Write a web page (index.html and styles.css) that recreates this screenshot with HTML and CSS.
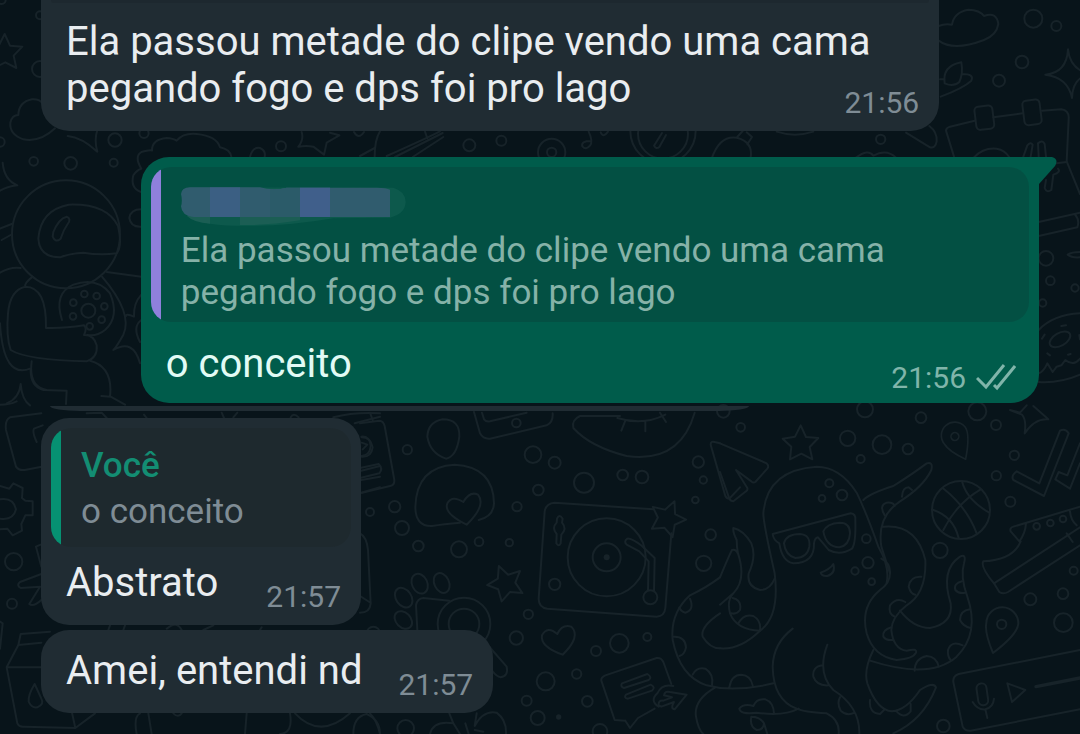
FILE: index.html
```html
<!DOCTYPE html>
<html lang="pt-BR">
<head>
    <meta charset="UTF-8">
    <meta name="viewport" content="width=device-width, initial-scale=1.0">
    <title>Conversa</title>
    <link rel="stylesheet" href="styles.css">
</head>
<body>
    <!-- Wallpaper doodles -->
    <svg class="wallpaper" width="1080" height="734" viewBox="0 0 3240 2202" aria-hidden="true">
        <defs>
            <path id="star" d="M0-52 L16-17 L53-14 L27 13 L35 50 L2 33 L-32 50 L-28 12 L-54-12 L-17-18 Z"/>
            <path id="sparkle" d="M-4-72 Q3-8 66 2 Q10 10 8 74 Q-4 12 -72 4 Q-8-2 -4-72 Z"/>
            <path id="pin" d="M-26 82 Q-52 20 -46-8 A48 48 0 0 1 50-6 Q48 26 -26 82 Z M14-4 a14 14 0 1 1-28 0 a14 14 0 1 1 28 0"/>
        </defs>

        <!-- top left -->
        <use href="#star" x="14" y="154"/>
        <circle cx="120" cy="207" r="24"/>
        <circle cx="120" cy="46" r="12"/>
        <circle cx="5" cy="0" r="12"/>
        <path d="M165 385 Q120 428 70 418 Q28 404 31 368 Q36 345 55 345 Q56 306 96 298 Q118 296 130 312"/>
        <circle cx="0" cy="426" r="14"/>
        <g transform="translate(0 360)">
            <circle cx="345" cy="60" r="20"/>
            <circle cx="432" cy="40" r="14"/>
            <circle cx="101" cy="124" r="13"/>
            <circle cx="212" cy="130" r="19"/>
            <circle cx="341" cy="128" r="12"/>
            <path d="M203 48 Q245 52 292 95 Q282 60 292 30 M8 128 Q12 180 52 196 Q20 200 0 212"/>
            <path d="M423 216 Q390 205 400 166 Q410 150 424 146 Q402 110 424 96 Q452 88 456 92 Q455 58 500 54 Q520 55 530 62 Q550 38 590 42 Q650 48 660 82 Q690 88 694 110"/>
            <path d="M423 268 Q392 268 388 294 Q392 322 424 320"/>
            <circle cx="843" cy="79" r="15"/>
            <path d="M750 110 Q758 80 780 84 Q798 92 794 110 M905 36 Q912 60 895 80 Q920 76 940 80 L972 104 L980 68 L1018 46 L990 38 M1062 36 Q1076 60 1092 36"/>
            <path d="M1080 108 L1124 84 M1124 110 Q1124 60 1140 34 M1160 108 Q1290 50 1320 34"/>
            <!-- astronaut -->
            <circle cx="198" cy="343" r="162"/>
            <path d="M115 355 Q122 270 206 254 Q320 250 354 318 Q368 380 350 400 Q300 406 250 398 Q210 400 180 412 Q118 412 115 355 Z"/>
            <path d="M160 336 Q176 296 200 290 Q215 296 203 312 Q190 330 182 356 Q166 370 158 350 Z"/>
            <path d="M0 326 L35 312 M5 360 L32 345 M0 458 Q30 440 62 444 M320 456 L424 470"/>
            <path d="M98 470 Q72 490 76 500 Q30 510 24 580 Q18 650 32 690 Q80 720 260 724 Q294 712 290 676 Q282 644 252 645 Q262 625 252 616 Q190 626 138 624 Q140 500 76 500"/>
            <path d="M306 470 Q400 580 370 644 Q350 680 340 690 Q400 655 420 730"/>
            <path d="M186 600 Q160 520 220 494 Q290 470 330 520 Q360 590 315 630 Q290 650 262 645"/>
            <circle cx="265" cy="572" r="21"/>
            <circle cx="253" cy="522" r="10"/><circle cx="290" cy="528" r="10"/><circle cx="313" cy="559" r="10"/>
            <circle cx="305" cy="599" r="10"/><circle cx="269" cy="619" r="10"/><circle cx="219" cy="589" r="10"/><circle cx="220" cy="548" r="10"/>
            <path d="M0 610 Q10 780 92 745 Q90 800 130 810 L200 812 L198 852 M95 724 Q85 800 140 810 M270 722 Q340 740 330 830 M304 828 L332 830 L375 854"/>
            <path d="M424 524 Q400 550 402 590 Q376 580 378 588 M424 600 Q396 620 420 666"/>
            <path d="M62 792 Q66 840 90 856 M62 792 Q58 835 20 850"/>
        </g>

        <!-- gap under the first message -->
        <g transform="translate(1140 375)">
            <path d="M45 96 L188 24 M98 96 L190 36 M135 20 L142 40"/>
            <circle cx="268" cy="61" r="18"/>
            <circle cx="364" cy="47" r="15"/>
            <circle cx="515" cy="82" r="41"/>
            <circle cx="515" cy="82" r="14"/>
            <path d="M626 20 Q640 50 630 62 Q618 76 607 64 Q602 48 632 48 M662 22 Q670 40 684 20"/>
            <circle cx="849" cy="18" r="98"/>
            <circle cx="849" cy="26" r="75"/>
            <path d="M846 24 L822 62 Q828 74 838 66 L858 30"/>
            <path d="M996 98 Q1020 30 1070 38 Q1120 50 1112 98 M1070 38 L1088 18 M1102 58 L1116 36 L1100 22"/>
            <path d="M1190 20 Q1245 38 1300 20"/>
            <circle cx="1502" cy="43" r="14"/>
            <path d="M1428 98 Q1465 70 1480 92 Q1520 70 1548 98"/>
        </g>

        <!-- right side -->
        <g transform="translate(2700 0)">
            <path d="M116 78 Q135 70 156 74 Q162 36 205 29 Q240 30 252 48 Q290 34 295 72 Q290 105 252 120 Q160 155 116 122"/>
            <circle cx="400" cy="56" r="27"/>
            <circle cx="469" cy="78" r="15"/>
            <circle cx="366" cy="186" r="19"/>
            <circle cx="297" cy="242" r="18"/>
            <use href="#sparkle" x="508" y="220"/>
            <path d="M120 238 L134 238 M134 250 Q126 198 184 187 Q190 220 178 246 Q160 262 134 250 M186 222 Q224 222 214 242 Q190 264 122 290"/>
            <path d="M162 470 L138 392 Q138 384 150 380 L224 362 M280 352 L368 340 M426 332 L484 328 Q508 332 506 356 L500 484 L540 582"/>
            <rect x="226" y="318" width="54" height="70" rx="12" transform="rotate(-7 253 353)"/>
            <rect x="370" y="300" width="52" height="74" rx="12" transform="rotate(-7 396 337)"/>
            <path d="M18 398 L90 442 Q106 446 110 424 Q112 396 88 378"/>
            <path d="M222 472 Q250 442 290 446 Q315 450 328 472 M370 470 L382 436 Q392 424 398 434 L392 470 M416 470 L414 430 Q428 418 434 432 L438 470"/>
            <path d="M438 540 L434 564 Q440 580 454 570 L460 524 Q484 516 474 506 M470 490 L500 486"/>
            <path d="M416 666 L540 638 M524 642 Q540 660 532 682 L416 708"/>
            <circle cx="438" cy="775" r="22"/>
            <circle cx="451" cy="842" r="13"/><circle cx="525" cy="864" r="11"/><circle cx="428" cy="909" r="11"/>
            <path d="M540 756 Q515 756 503 764 Q515 774 540 772"/>
            <path d="M416 990 Q460 944 540 940 M416 1146 Q480 1150 540 1124"/>
            <ellipse cx="480" cy="1018" rx="34" ry="19" transform="rotate(-30 480 1018)"/>
            <path d="M416 1120 Q430 1116 442 1090 L458 1116 L470 1100 L484 1096 L496 1080 Q520 1100 540 1076 M426 1016 L434 1004 M484 978 L498 976 M442 1060 L450 1066 M504 1064 L512 1062 M538 1005 L540 1018"/>
        </g>

        <!-- bottom left -->
        <g transform="translate(0 1200)">
            <path d="M124 40 L30 52 Q14 60 18 90 L48 200 Q56 212 74 210 L125 200 M128 76 L102 86 Q96 96 110 126 M0 14 Q30 14 50 4"/>
            <path d="M0 258 L28 266 L40 250 L68 264 L66 294 L76 302 L98 304 L98 346 L76 346 L64 372 L66 392 L38 406 L22 386 L0 388"/>
            <path d="M0 298 Q40 292 48 328 Q40 362 0 356"/>
            <circle cx="41" cy="485" r="26"/>
            <circle cx="36" cy="611" r="15"/>
            <path d="M122 434 L108 440 L124 500 M124 522 L60 546 Q48 556 62 564 L120 560 L88 612 Q100 622 124 600 M0 665 L8 670 L0 746"/>
            <path d="M55 735 L62 702 L150 695 M55 735 L20 802 L52 970 Q58 982 72 980 L226 984 L285 940 M55 735 L124 728 M20 802 L124 802 M226 984 L216 938"/>
            <path d="M104 852 Q84 885 86 905 Q95 925 112 922 Q134 912 124 896 Z"/>
            <path d="M1064 70 L1140 50 M1084 110 Q1110 108 1112 138 Q1110 166 1084 168 M1084 212 L1140 198 M1084 240 L1140 230 M1084 278 L1140 262"/>
            <path d="M410 1002 Q400 950 420 940 M455 1002 L445 940 M520 940 Q535 955 545 940 M735 1002 L740 940 M870 940 Q880 1000 840 1002 M885 940 Q960 1020 1050 940 M1060 1002 Q1060 950 1100 942 Q1140 960 1140 1002"/>
            <path d="M325 690 L330 676 M370 690 L375 676 M500 686 Q530 660 545 690 M610 690 L640 676 M780 690 L785 682"/>
            <path d="M260 40 L305 38 L320 54 M432 44 L440 54 M665 38 L672 54 M700 52 L712 38 M872 52 Q880 36 896 52 M1000 52 Q1060 36 1140 40"/>
        </g>

        <!-- record player, hearts and paw -->
        <g transform="translate(1080 1200)">
            <path d="M0 70 L58 62 Q70 62 74 78 L103 240 Q104 256 90 258 L0 280 M5 112 Q32 112 38 142 Q34 172 5 170 M5 128 L22 134 L8 148 M0 204 L56 192 Q70 206 58 220 L0 234 M30 38 L38 60"/>
            <path d="M0 400 Q20 410 24 450 L32 610 Q30 638 0 638 M0 588 L28 606"/>
            <circle cx="30" cy="336" r="12"/><circle cx="142" cy="149" r="14"/><circle cx="104" cy="320" r="17"/>
            <circle cx="126" cy="384" r="21"/><circle cx="175" cy="438" r="16"/><circle cx="297" cy="448" r="24"/>
            <circle cx="357" cy="425" r="13"/><circle cx="448" cy="428" r="11"/><circle cx="471" cy="320" r="14"/>
            <circle cx="535" cy="270" r="16"/><circle cx="519" cy="164" r="25"/><circle cx="584" cy="188" r="18"/>
            <circle cx="672" cy="248" r="30"/><circle cx="788" cy="225" r="16"/><circle cx="846" cy="231" r="19"/>
            <circle cx="1015" cy="186" r="17"/><circle cx="1030" cy="240" r="11"/><circle cx="1006" cy="300" r="10"/>
            <circle cx="1052" cy="404" r="16"/><circle cx="1031" cy="490" r="23"/>
            <path d="M248 58 Q300 58 298 110 Q290 170 258 176 Q210 160 202 110 Q204 66 248 58 Z"/>
            <path d="M300 368 Q250 372 216 378 Q166 380 166 320 Q170 200 284 194 Q400 200 402 310 Q400 350 356 360"/>
            <path d="M320 374 Q250 340 262 310 Q276 284 310 306 Q330 272 354 284 Q380 316 320 374 Z"/>
            <path d="M342 36 L360 100 Q370 118 390 116 L560 76 Q580 66 578 40 M366 38 L372 58 Q378 66 390 64 L500 38"/>
            <circle cx="469" cy="69" r="13"/>
            <path d="M780 48 L660 48 Q634 60 640 84 Q690 140 800 168 Q960 190 1004 38 M772 54 Q850 78 916 44 M796 62 L784 92 M856 62 L856 94 M900 38 L918 66"/>
            <path d="M1140 262 L1108 296 Q1100 296 1096 288 L1052 134 Q1052 122 1064 126 L1080 130"/>
            <!-- turntable -->
            <path d="M880 328 L584 308 Q558 310 554 334 L536 596 Q536 622 562 626 L890 650 Q914 648 916 624 L934 400"/>
            <circle cx="740" cy="472" r="117"/>
            <circle cx="740" cy="472" r="42"/>
            <circle class="dot" cx="740" cy="472" r="9"/>
            <circle cx="584" cy="553" r="17"/>
            <circle cx="871" cy="592" r="21"/>
            <path d="M864 570 L866 484 L838 454 L800 434 Q790 424 802 416 Q814 414 846 438 L884 474 L882 572"/>
            <path d="M591 356 Q598 340 608 356 L606 368 Q622 386 604 404 L602 430 Q596 442 589 430 L590 402 Q574 384 590 368 Z"/>
            <use href="#star" transform="translate(924 352) rotate(22)"/>
            <use href="#star" transform="translate(436 546) rotate(-22)"/>
            <!-- paw and magnifier -->
            <ellipse cx="179" cy="551" rx="23" ry="31" transform="rotate(-25 179 551)"/>
            <ellipse cx="245" cy="549" rx="22" ry="31" transform="rotate(-25 245 549)"/>
            <ellipse cx="131" cy="593" rx="23" ry="32" transform="rotate(-35 131 593)"/>
            <ellipse cx="130" cy="660" rx="22" ry="30" transform="rotate(-45 130 660)"/>
            <path d="M172 690 L168 615 Q172 596 190 594 L268 602"/>
            <circle cx="312" cy="672" r="79"/>
            <circle cx="312" cy="672" r="46"/>
            <path d="M386 738 L440 800 Q446 828 422 832 Q410 830 396 812"/>
            <circle cx="40" cy="700" r="20"/>
            <circle cx="505" cy="643" r="14"/><circle cx="469" cy="714" r="20"/><circle cx="778" cy="730" r="28"/>
            <circle cx="708" cy="753" r="15"/><circle cx="862" cy="711" r="12"/><circle cx="557" cy="844" r="27"/>
            <circle cx="650" cy="822" r="14"/><circle cx="500" cy="902" r="15"/><circle cx="682" cy="904" r="16"/>
            <circle cx="533" cy="954" r="21"/><circle cx="720" cy="994" r="22"/><circle cx="137" cy="985" r="25"/>
            <circle class="dot" cx="596" cy="951" r="8"/>
            <path d="M608 764 Q540 740 546 706 Q562 676 592 702 Q606 672 634 680 Q664 710 608 764 Z"/>
            <path d="M796 962 L764 960 L724 842 Q722 832 736 826 L890 774 Q904 772 910 786 L934 852 M796 962 L810 984 L834 954 L884 926"/>
            <path d="M786 850 L862 822 Q878 832 866 840 L792 864 Q780 860 786 850 Z M798 884 L872 854 Q888 862 876 872 L804 896 Q790 894 798 884 Z"/>
            <path d="M896 920 Q868 902 892 880 Q906 850 940 858 M896 916 Q894 900 910 902 L936 892 L912 886 Q914 872 930 876 L980 884 L944 928 Q930 926 942 906 L904 920 Z"/>
            <path d="M30 940 Q50 960 60 1002 M210 1002 Q220 960 280 970 L268 940 M280 970 L300 1002 M350 940 L344 978 Q370 930 410 938 Q440 960 438 1002 M316 970 L326 1002 M344 990 L370 995"/>
            <!-- left tentacles -->
            <path d="M1080 532 Q1040 562 990 586 Q930 640 938 720 Q960 830 1040 856 L1080 864 M1080 640 Q1020 680 1028 710 Q1050 745 1080 745 M1066 862 Q1000 900 1008 950 Q1015 990 1030 1002"/>
            <path d="M990 596 Q1004 630 976 638 Q962 634 958 622 M940 710 Q976 708 978 742 Q974 764 958 768 M998 824 Q1010 800 1036 806 Q1062 822 1056 856"/>
        </g>

        <!-- octopus, ball and shoe -->
        <g transform="translate(2160 1200)">
            <use href="#star" x="242" y="128"/>
            <path d="M0 130 L140 190 Q148 198 142 206 L106 246 Q100 250 94 244 L48 210 L82 264 Q84 270 78 274 L40 304 Q32 304 28 296 L0 216"/>
            <circle cx="62" cy="82" r="13"/><circle cx="10" cy="34" r="19"/><circle cx="435" cy="28" r="24"/><circle cx="603" cy="53" r="16"/>
            <circle cx="383" cy="115" r="23"/><circle cx="486" cy="134" r="28"/><circle cx="564" cy="147" r="16"/>
            <circle cx="422" cy="177" r="12"/><circle cx="772" cy="34" r="27"/><circle cx="828" cy="75" r="15"/>
            <circle cx="883" cy="166" r="14"/><circle cx="829" cy="227" r="14"/><circle cx="871" cy="305" r="15"/>
            <circle cx="660" cy="451" r="23"/><circle cx="931" cy="598" r="18"/><circle cx="1029" cy="581" r="16"/>
            <circle cx="1061" cy="512" r="12"/><circle cx="1030" cy="668" r="28"/><circle cx="670" cy="978" r="19"/>
            <use href="#pin" transform="translate(707 112) rotate(-42) scale(.84)"/>
            <use href="#pin" transform="translate(845 677)"/>
            <path d="M870 30 L900 38 L920 16 M940 18 L985 58 Q945 54 914 100 Q920 60 906 44 L870 30"/>
            <path d="M890 214 L958 250 L1020 92 Q1036 84 1046 100 L972 288 L880 240 Q872 228 890 214 Z M1080 130 L1042 226 L1016 216 L1006 238 L1050 266 L1080 190"/>
            <!-- octopus -->
            <path d="M500 548 Q510 500 475 440 Q440 340 410 278 Q360 200 290 200 Q140 210 130 340 Q130 370 164 520 Q180 650 120 692 Q60 750 0 745"/>
            <path d="M158 402 L392 340 Q408 342 406 360 Q408 430 396 446 Q360 468 326 450 Q310 430 294 412 Q284 414 282 430 Q284 490 220 490 Q186 484 178 430 Q160 420 158 402 Z"/>
            <path d="M192 430 Q198 402 240 402 Q272 404 268 440 Q262 474 226 474 Q196 466 192 430 Z M310 394 Q320 370 360 368 Q390 368 390 400 Q388 436 358 442 Q318 440 310 394 Z"/>
            <path d="M302 518 Q330 508 340 492 Q348 520 322 528 Q306 530 302 518 Z"/>
            <circle cx="328" cy="250" r="12"/><circle cx="306" cy="295" r="10"/><circle cx="366" cy="285" r="16"/>
            <circle cx="439" cy="416" r="13"/><circle cx="444" cy="488" r="17"/><circle cx="405" cy="513" r="11"/><circle cx="455" cy="545" r="10"/>
            <path d="M430 300 Q450 280 520 258 Q580 220 620 190 Q640 184 634 210 Q610 260 540 304 Q470 350 484 440 Q500 490 510 520 Q510 550 480 570 Q420 620 440 700 Q460 770 530 780 Q580 776 588 758 Q592 744 560 752 Q520 748 514 690 Q516 650 560 616 Q620 580 616 480 Q590 370 490 380"/>
            <path d="M494 346 Q476 316 500 308 Q520 306 524 318 M546 290 Q548 262 566 262 L576 270 M484 476 Q512 490 510 520"/>
            <path d="M604 530 Q570 528 566 560 Q572 582 586 584 M556 606 Q530 590 510 616 Q504 642 524 650 M514 682 Q486 690 490 710 Q498 722 518 720"/>
            <path d="M540 632 Q580 684 630 684 Q700 670 692 610 Q660 510 720 470 Q740 460 732 490 Q720 530 742 590 Q780 700 710 770 Q630 840 450 782"/>
            <path d="M726 544 Q700 550 706 570 Q716 582 736 578 M750 628 Q720 632 720 660 Q730 680 752 684 M728 736 Q694 720 684 750 Q682 770 692 780 M584 812 Q584 776 620 768 Q650 770 656 800"/>
            <path d="M460 750 Q430 810 442 850 Q470 930 516 934 Q560 930 600 870 Q640 844 648 862 Q610 960 520 1000 M450 900 Q446 940 480 942 L492 930 M528 932 Q550 960 572 934 L572 912"/>
            <path d="M218 686 Q160 730 158 800 Q160 900 230 926 Q250 936 320 940 Q360 960 356 1002 M322 734 Q290 820 340 870 Q420 920 418 1002 M308 796 Q276 800 280 830 Q290 858 324 856 M360 892 Q350 910 362 932 Q380 950 404 938"/>
            <path d="M0 864 Q80 870 160 850 M28 862 Q34 824 64 824 Q92 826 98 856 M236 926 Q190 950 110 938 Q60 944 58 926 Q70 910 100 918 Q110 894 136 898 Q160 906 162 940 M94 950 Q88 980 110 990 Q130 990 132 970 Q120 950 94 950 M132 970 L142 1002"/>
            <path d="M164 536 Q150 570 120 570 Q80 560 86 520 Q110 470 94 430 Q70 390 40 384 Q38 396 50 420 Q50 440 54 460 Q80 540 40 580 Q20 600 30 640 Q50 690 120 692 M0 532 Q30 460 36 450 Q48 446 54 462 M0 614 L40 580 M38 594 Q66 600 60 630 Q50 644 34 640 M54 672 Q70 640 100 648 Q124 662 120 690"/>
            <!-- basketball -->
            <circle cx="723" cy="330" r="87"/>
            <path d="M668 264 Q740 320 770 400 M726 244 Q740 300 808 338 M640 330 Q700 350 716 414 M782 268 Q710 310 670 390"/>
            <!-- shoe -->
            <path d="M1080 320 L880 380 Q868 384 872 394 L898 424 Q916 400 918 370 M902 424 Q880 480 790 484 Q780 500 822 550 L838 576 Q850 584 864 576 L1080 436 M822 550 L1080 382 M1050 334 Q1052 360 1070 376 M1040 400 L1058 426"/>
            <circle cx="950" cy="379" r="10"/><circle cx="991" cy="369" r="10"/><circle cx="1029" cy="357" r="10"/>
            <!-- voice message -->
            <path d="M1080 750 L716 822 Q698 828 700 846 L728 980 Q736 994 752 992 L1080 928"/>
            <path d="M862 850 L916 870 L876 906 Z M758 906 Q772 930 796 928 Q820 922 822 896 M796 928 L802 954"/>
            <path d="M948 860 L1080 834" stroke-width="10"/>
            <rect x="772" y="850" width="30" height="66" rx="15" transform="rotate(-8 787 883)"/>
        </g>
    </svg>

    <main class="chat">
        <div class="message incoming continued">
            <div class="quote-end"></div>
            <p class="text">Ela passou metade do clipe vendo uma cama pegando fogo e dps foi pro lago<time class="time">21:56</time></p>
        </div>

        <div class="message outgoing">
            <svg class="tail" width="18" height="28" viewBox="0 0 18 28" aria-hidden="true">
                <path d="M0 0 H13 Q20 2 16 9 L0 27 Z"/>
            </svg>
            <div class="quote quote-contact">
                <div class="quote-name">
                    <!-- hidden contact name -->
                    <svg class="smudge" width="227" height="42" viewBox="543 195 681 126" aria-hidden="true">
                        <path fill="#0d594c" d="M545 220 Q550 203 590 205 L1180 206 Q1218 218 1217 250 Q1215 285 1170 296 L1000 298 Q850 324 720 320 Q590 322 550 280 Z"/>
                        <path fill="#1b5e54" d="M560 290 H630 V314 Q580 310 560 290 Z M720 294 H900 V304 Q800 320 720 318 Z"/>
                        <path fill="#305c6e" d="M543 225 Q545 206 570 205 H780 Q820 216 860 206 H1130 Q1160 206 1170 212 V294 H580 Q545 290 543 262 Q548 245 543 225 Z"/>
                        <path fill="#3b5f83" d="M630 205 H720 V294 H630 Z"/>
                        <path fill="#2b5b69" d="M810 211 Q840 212 860 206 H900 V294 H810 Z"/>
                        <path fill="#405f8b" d="M900 206 H990 V294 H900 Z"/>
                    </svg>
                </div>
                <p class="quote-text">Ela passou metade do clipe vendo uma cama pegando fogo e dps foi pro lago</p>
            </div>
            <p class="text">o conceito<span class="time"><time>21:56</time><svg class="checks" width="40" height="28" viewBox="0 0 40 28" aria-label="Entregue"><path d="M1 15 L10 24 L28 2 M18 22 L21 25 L39 3"/></svg></span></p>
        </div>

        <div class="cut-message"></div>

        <div class="message incoming">
            <div class="quote quote-self">
                <div class="quote-name">Você</div>
                <p class="quote-text">o conceito</p>
            </div>
            <p class="text">Abstrato<time class="time">21:57</time></p>
        </div>

        <div class="message incoming">
            <p class="text">Amei, entendi nd<time class="time">21:57</time></p>
        </div>
    </main>
</body>
</html>
```

FILE: styles.css
```css
* {
    box-sizing: border-box;
}
body {
    margin: 0;
    min-height: 100vh;
    position: relative;
    overflow: hidden;
    background-color: #08141a;
    font-family: Roboto, "Liberation Sans", sans-serif;
}
p {
    margin: 0;
}
.wallpaper {
    position: absolute;
    top: 0;
    left: 0;
    fill: none;
    stroke: #172329;
    stroke-width: 6;
    stroke-linecap: round;
    stroke-linejoin: round;
}
.wallpaper .dot {
    fill: #172329;
    stroke: none;
}
.chat {
    position: relative;
    display: flex;
    flex-direction: column;
    align-items: flex-start;
    padding: 0 41px 21px;
}

/* Bubbles */
.message {
    position: relative;
    max-width: 90%;
    padding: 10px;
    margin-bottom: 5px;
    border-radius: 28px;
}
.incoming {
    background-color: #202c33;
    color: #e9edf0;
}
.outgoing {
    align-self: flex-end;
    padding-bottom: 7px;
    background-color: #005c4b;
    color: #e2fbf5;
    margin-bottom: 3px;
    border-top-right-radius: 0;
}
.continued {
    padding-top: 0;
    margin-bottom: 26px;
    border-radius: 0 0 28px 28px;
}
.quote-end {
    height: 3px;
    margin-bottom: 8px;
    border-radius: 0 0 20px 20px;
    background-color: #1d282f;
}
.cut-message {
    width: 70%;
    height: 5px;
    margin: 0 0 7px 9px;
    border-radius: 0 0 30px 30px / 0 0 5px 5px;
    background-color: #202c33;
}
.tail {
    position: absolute;
    top: 0;
    left: 100%;
    fill: #005c4b;
}

/* Message text */
.text {
    padding: 7px 10px 9px 15px;
    font-size: 40px;
    line-height: 47px;
}
.time {
    float: right;
    display: flex;
    gap: 10px;
    margin: 20px 0 0 36px;
    font-size: 30px;
    line-height: 36px;
    color: #7f8c95;
}
.outgoing .time {
    color: #80b5aa;
}
.checks {
    margin: 3px 3px 0 0;
    fill: none;
    stroke: #80b5aa;
    stroke-width: 3;
}

/* Quoted message */
.quote {
    padding: 17px 30px 8px;
    margin-bottom: 5px;
    border-radius: 20px;
    font-size: 35px;
    line-height: 42px;
}
.quote-contact {
    margin-bottom: 11px;
    background: linear-gradient(to right, #8f80dc 10px, #035043 10px);
    color: #86b2a8;
}
.quote-self {
    min-width: 300px;
    min-height: 119px;
    background: linear-gradient(to right, #069172 10px, #1e292e 10px);
    color: #7f8c95;
}
.quote-name {
    height: 42px;
    margin-bottom: 4px;
    font-weight: 500;
}
.quote-self .quote-name {
    color: #138d73;
}
.smudge {
    display: block;
}
```
